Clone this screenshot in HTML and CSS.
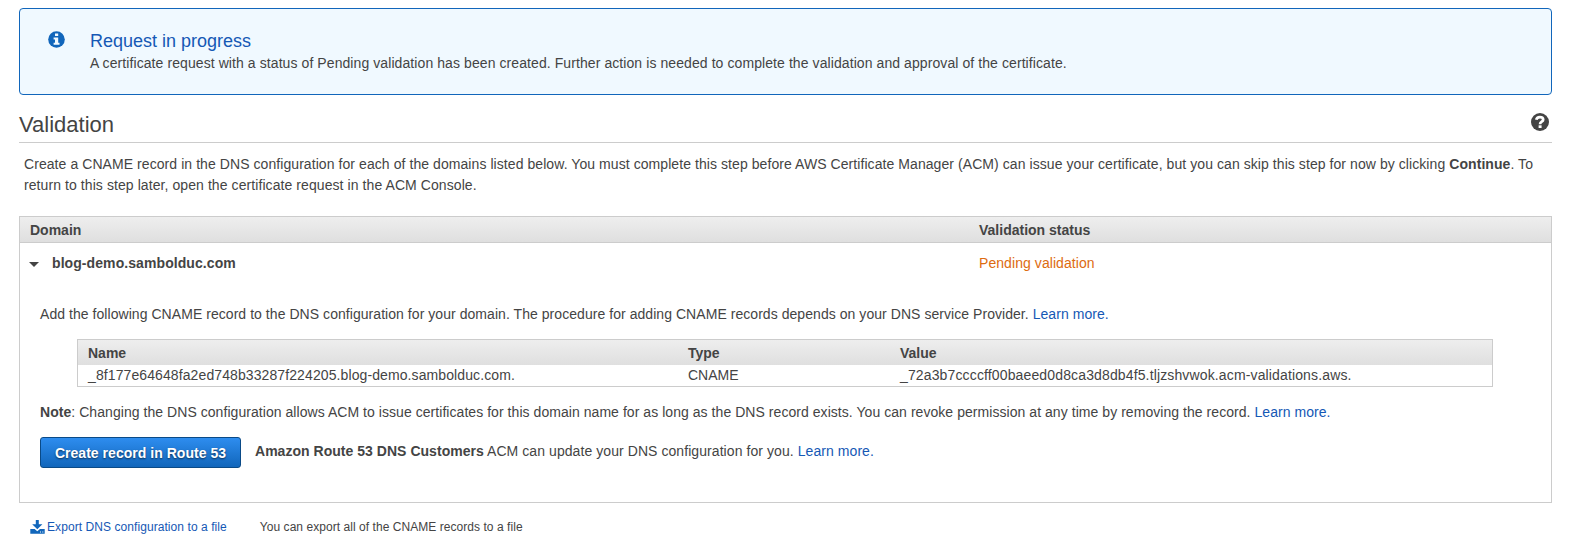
FILE: index.html
```html
<!DOCTYPE html>
<html lang="en">
<head>
<meta charset="utf-8">
<title>Validation</title>
<link rel="stylesheet" href="styles.css">
</head>
<body>
<main class="page">
  <section class="alert">
    <svg class="alert-icon" viewBox="0 0 17 17"><circle cx="8.5" cy="8.5" r="8.3" fill="#1166bb"/><path d="M7 2.4h3.2v2.7H7zM5.6 6.5h4.6v5.2h1.3v2H5.6v-2H7V8.5H5.6z" fill="#f0f9ff"/></svg>
    <div class="alert-body">
      <h2 class="alert-title">Request in progress</h2>
      <p class="alert-text">A certificate request with a status of Pending validation has been created. Further action is needed to complete the validation and approval of the certificate.</p>
    </div>
  </section>
  <header class="heading">
    <h1 class="title">Validation</h1>
    <svg class="help" viewBox="0 0 18 18"><circle cx="9" cy="9" r="9" fill="#444"/><path d="M5.3 6.8C5.6 4.8 7 4.1 8.9 4.1c2 0 3.3 1 3.3 2.6C12.2 8.8 9 8.6 9 11.2" fill="none" stroke="#fff" stroke-width="2.7"/><path d="M7.6 12.3h3v2.7h-3z" fill="#fff"/></svg>
  </header>
  <p class="intro"><span class="intro-first">Create a CNAME record in the DNS configuration for each of the domains listed below. You must complete this step before AWS Certificate Manager (ACM) can issue your certificate, but you can skip this step for now by clicking <b>Continue</b>. To</span><br><span class="intro-second">return to this step later, open the certificate request in the ACM Console.</span></p>
  <section class="domains">
    <div class="domains-head"><span class="h-domain">Domain</span><span class="h-status">Validation status</span></div>
    <div class="domain-row">
      <div class="domain-name"><svg class="caret" viewBox="0 0 10 5"><path d="M0 0h10L5 5z" fill="#444"/></svg><b class="domain-label">blog-demo.sambolduc.com</b></div>
      <span class="status">Pending validation</span>
    </div>
    <p class="add"><span class="add-text">Add the following CNAME record to the DNS configuration for your domain. The procedure for adding CNAME records depends on your DNS service Provider. <a class="link">Learn more.</a></span></p>
    <div class="records">
      <div class="records-row records-head"><span class="h-name">Name</span><span class="h-type">Type</span><span class="h-value">Value</span></div>
      <div class="records-row"><span class="v-name">_8f177e64648fa2ed748b33287f224205.blog-demo.sambolduc.com.</span><span class="v-type">CNAME</span><span class="v-value">_72a3b7ccccff00baeed0d8ca3d8db4f5.tljzshvwok.acm-validations.aws.</span></div>
    </div>
    <p class="note"><span class="note-text"><b>Note</b>: Changing the DNS configuration allows ACM to issue certificates for this domain name for as long as the DNS record exists. You can revoke permission at any time by removing the record. <a class="link">Learn more.</a></span></p>
    <div class="actions">
      <button class="button">Create record in Route 53</button>
      <span class="route"><b class="route-bold">Amazon Route 53 DNS Customers</b> ACM can update your DNS configuration for you. <a class="link">Learn more.</a></span>
    </div>
  </section>
  <footer class="export">
    <svg class="download" viewBox="0 0 15 14"><path d="M5.8 0h3v4.2h3.6L7.3 9.3 2.2 4.2h3.6z" fill="#1166bb"/><path d="M.3 9h4.3l2.7 2.3L10 9h4.7v4.7H.3z" fill="#1166bb"/><path d="M10 11.6h1v1h-1zM12.3 11.6h1v1h-1z" fill="#fff"/></svg>
    <a class="link export-link">Export DNS configuration to a file</a>
    <span class="export-text">You can export all of the CNAME records to a file</span>
  </footer>
</main>
</body>
</html>
```
FILE: styles.css
```css
* { box-sizing: border-box; }
body { margin: 0; background: #fff; color: #444; font: 14px/20px "Liberation Sans", Arial, sans-serif; white-space: nowrap; }
h1, h2, p { margin: 0; font-weight: normal; }
.page { padding: 8px 17px 0 19px; }
.link { color: #1558b5; }
.alert { height: 87px; display: flex; padding: 20px 0 0 28px; border: 1px solid #1166bb; border-radius: 4px; background: #f0f9ff; }
.alert-icon { width: 17px; height: 17px; margin: 2px 25px 0 0; flex: none; }
.alert-title { font-size: 18px; line-height: 24px; color: #1558b5; }
.alert-text { line-height: 20px; letter-spacing: .083px; }
.heading { height: 48px; display: flex; justify-content: space-between; border-bottom: 1px solid #ccc; }
.title { font-size: 22px; line-height: 28px; padding-top: 16px; }
.help { width: 18px; height: 18px; margin: 18px 3px 0 0; }
.intro { padding: 11px 0 0 5px; height: 73px; line-height: 21px; }
.intro-first { letter-spacing: .07px; }
.intro-second { letter-spacing: .08px; }
.domains { height: 287px; border: 1px solid #ccc; }
.domains-head { height: 26px; display: grid; grid-template-columns: 949px 1fr; padding-left: 10px; border-bottom: 1px solid #ccc; background: linear-gradient(#eee, #dfdfdf); font-weight: bold; line-height: 26px; }
.domain-row { display: grid; grid-template-columns: 949px 1fr; padding: 10px 0 0 10px; height: 61px; }
.domain-name { display: flex; }
.caret { width: 10px; height: 5px; margin: 9px 12px 0 -1px; }
.domain-label { margin-left: 1px; letter-spacing: .08px; }
.status { color: #dd6b10; letter-spacing: .07px; }
.add { padding-left: 20px; height: 35px; }
.add-text { letter-spacing: .052px; }
.records { height: 48px; margin: 0 58px 0 57px; border: 1px solid #ccc; }
.records-row { display: grid; grid-template-columns: 600px 212px 1fr; padding-left: 10px; line-height: 21px; }
.records-head { height: 25px; line-height: 26px; font-weight: bold; background: linear-gradient(#eee, #dfdfdf); }
.v-name { letter-spacing: .1px; }
.v-value { letter-spacing: .138px; }
.note { padding: 15px 0 0 20px; height: 50px; }
.note-text { letter-spacing: .052px; }
.actions { display: flex; padding-left: 20px; }
.button { width: 201px; height: 31px; padding: 1px 0 0; border: 1px solid #0a4a87; border-radius: 3px; background: linear-gradient(#2e8def, #1166bb); color: #fff; font: bold 14px "Liberation Sans", Arial, sans-serif; letter-spacing: .03px; text-shadow: 0 1px 2px rgba(0, 0, 0, .6); }
.route { margin: 4px 0 0 14px; letter-spacing: .07px; }
.route-bold { letter-spacing: .03px; }
.export { display: flex; padding: 14px 0 0 11px; font-size: 12px; }
.download { width: 15px; height: 14px; margin: 3px 2px 0 0; }
.export-link { letter-spacing: .07px; }
.export-text { margin-left: 33px; letter-spacing: .05px; }
```
